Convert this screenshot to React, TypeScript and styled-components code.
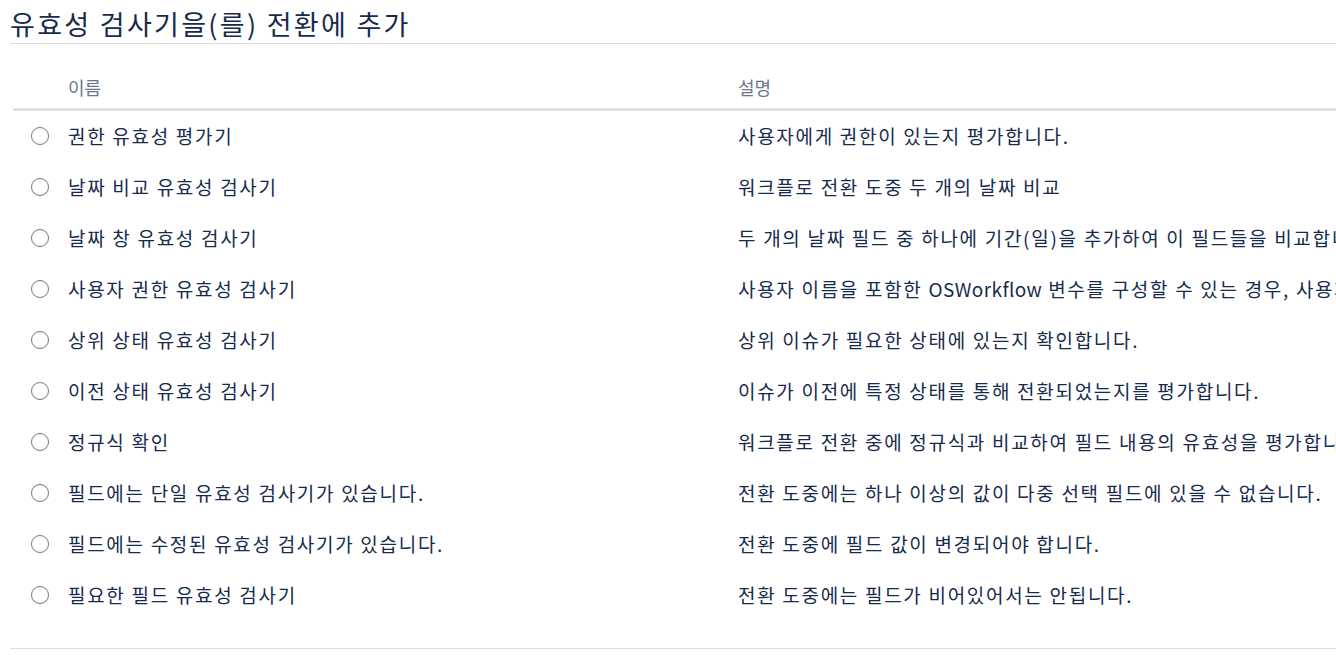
import type { ReactNode } from "react";
import styled, { createGlobalStyle } from "styled-components";

const GlobalStyle = createGlobalStyle`
  html, body {
    margin: 0;
    padding: 0;
    background: #ffffff;
    overflow: hidden;
  }
  body {
    font-family: "Noto Sans CJK KR", "Noto Sans", sans-serif;
    color: #172b4d;
  }
`;

// 라틴 문자는 자간을 좁게
const Latin = styled.span`
  letter-spacing: 0.4px;
`;

type Validator = { name: string; desc: ReactNode };

const validators: Validator[] = [
  { name: "권한 유효성 평가기", desc: "사용자에게 권한이 있는지 평가합니다." },
  { name: "날짜 비교 유효성 검사기", desc: "워크플로 전환 도중 두 개의 날짜 비교" },
  { name: "날짜 창 유효성 검사기", desc: "두 개의 날짜 필드 중 하나에 기간(일)을 추가하여 이 필드들을 비교합니다." },
  {
    name: "사용자 권한 유효성 검사기",
    desc: (
      <>
        사용자 이름을 포함한 <Latin>OSWorkflow</Latin> 변수를 구성할 수 있는 경우, 사용자 권한을 평가합니다.
      </>
    ),
  },
  { name: "상위 상태 유효성 검사기", desc: "상위 이슈가 필요한 상태에 있는지 확인합니다." },
  { name: "이전 상태 유효성 검사기", desc: "이슈가 이전에 특정 상태를 통해 전환되었는지를 평가합니다." },
  { name: "정규식 확인", desc: "워크플로 전환 중에 정규식과 비교하여 필드 내용의 유효성을 평가합니다." },
  { name: "필드에는 단일 유효성 검사기가 있습니다.", desc: "전환 도중에는 하나 이상의 값이 다중 선택 필드에 있을 수 없습니다." },
  { name: "필드에는 수정된 유효성 검사기가 있습니다.", desc: "전환 도중에 필드 값이 변경되어야 합니다." },
  { name: "필요한 필드 유효성 검사기", desc: "전환 도중에는 필드가 비어있어서는 안됩니다." },
];

const App = () => {
  return (
    <Page>
      <GlobalStyle />
      <Title>유효성 검사기을(를) 전환에 추가</Title>
      <Table>
        <HeadRow>
          <span />
          <HeadCell>이름</HeadCell>
          <HeadCell>설명</HeadCell>
        </HeadRow>
        {validators.map((v) => (
          <Row key={v.name}>
            <RadioCell>
              <Radio type="radio" name="validator" value={v.name} />
            </RadioCell>
            <Cell>{v.name}</Cell>
            <Cell>{v.desc}</Cell>
          </Row>
        ))}
      </Table>
      <Footer />
    </Page>
  );
};

export default App;

const Page = styled.div`
  width: 1336px;
  height: 655px;
  padding: 0 0 0 10px;
  box-sizing: border-box;
  overflow: hidden;
`;

const Title = styled.h2`
  margin: 0;
  padding: 6px 0 0;
  height: 44px;
  box-sizing: border-box;
  font-size: 27px;
  font-weight: 400;
  line-height: 36px;
  letter-spacing: 2.3px;
  color: #172b4d;
  border-bottom: 1px solid #dcdcdc;
  white-space: nowrap;
`;

const Table = styled.div`
  margin-left: 3px;
  width: 1700px;
`;

const HeadRow = styled.div`
  display: grid;
  grid-template-columns: 55px 670px 1fr;
  align-items: end;
  height: 67px;
  padding-bottom: 9px;
  box-sizing: border-box;
  border-bottom: 3px solid #dfe1e6;
`;

const HeadCell = styled.div`
  font-size: 18px;
  line-height: 24px;
  color: #6b778c;
  white-space: nowrap;
`;

const Row = styled.div`
  display: grid;
  grid-template-columns: 55px 670px 1fr;
  align-items: center;
  height: 51px;
  padding-bottom: 2px;
  box-sizing: border-box;
`;

const RadioCell = styled.div`
  display: flex;
  align-items: center;
  padding-left: 18px;
`;

const Radio = styled.input`
  appearance: none;
  margin: 0;
  width: 18px;
  height: 18px;
  border: 1.5px solid #767676;
  border-radius: 50%;
  box-sizing: border-box;
  background: #fff;
`;

const Cell = styled.div`
  font-size: 19px;
  line-height: 24px;
  letter-spacing: 1.7px;
  color: #172b4d;
  white-space: nowrap;
`;

const Footer = styled.div`
  margin-top: 27px;
  border-top: 1px solid #dcdcdc;
`;
